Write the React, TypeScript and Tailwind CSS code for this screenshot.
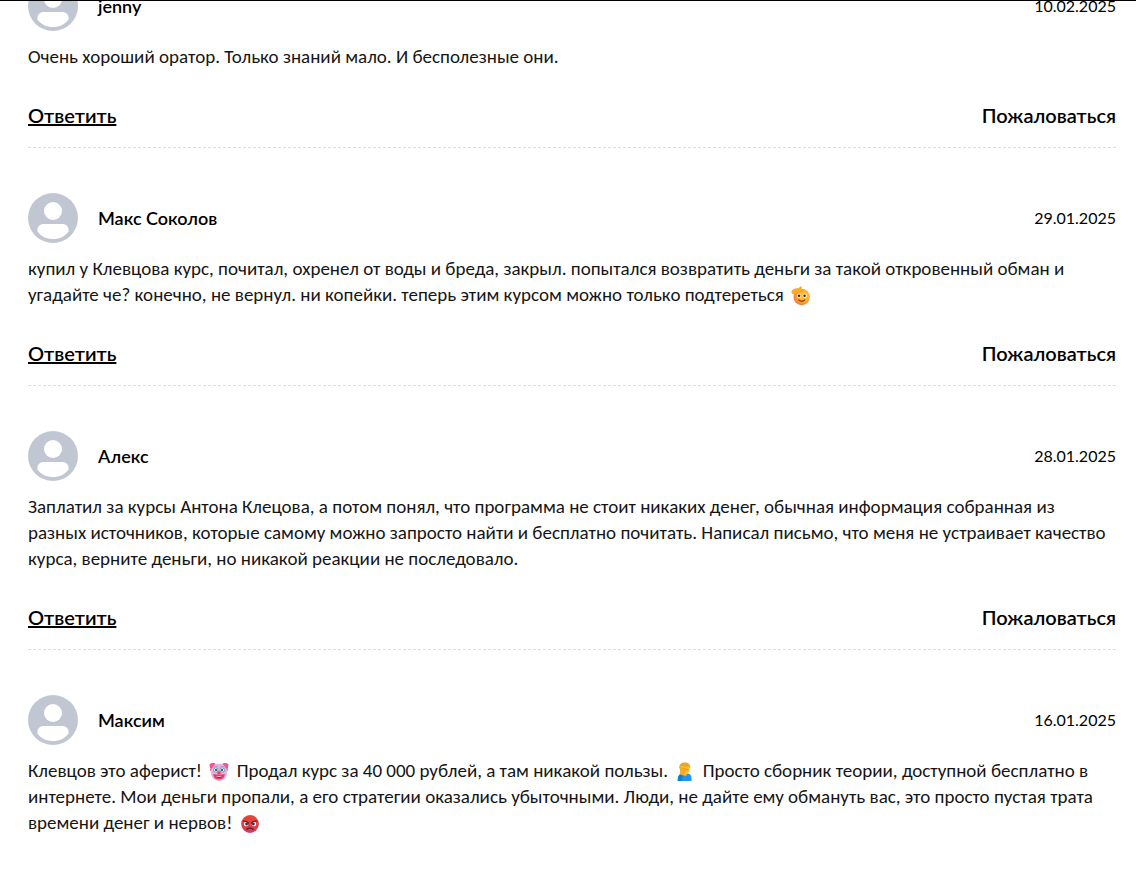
import type { ReactNode } from "react"

type Comment = {
  name: string
  date: string
  body: ReactNode
}

const emojiClass = "mx-[3px] inline-block size-5 align-[-5px]"

function SaluteEmoji() {
  return (
    <svg viewBox="0 0 20 20" className={emojiClass} role="img" aria-label="Салют">
      <defs>
        <radialGradient id="salute" cx=".6" cy=".4" r=".6">
          <stop offset="0" stopColor="#ffd03e" />
          <stop offset=".6" stopColor="#ffb02e" />
          <stop offset="1" stopColor="#f4793b" />
        </radialGradient>
      </defs>
      <circle cx="10.7" cy="11" r="8.2" fill="url(#salute)" />
      <ellipse cx="7.8" cy="9.8" rx="1.9" ry="2" fill="#fff" />
      <ellipse cx="13.8" cy="9.8" rx="1.9" ry="2" fill="#fff" />
      <circle cx="8" cy="9.8" r="1.3" fill="#402a32" />
      <circle cx="13.6" cy="9.8" r="1.3" fill="#402a32" />
      <path d="M7.8 13.8q3 2.8 6 0" fill="none" stroke="#6b3520" strokeWidth="1.1" strokeLinecap="round" />
      <path
        d="M.8 5.2C2 3 5 2.600 7.500 2.600l2-1.800c.8-.4 1.300.4.800 1.200l-.5 1 2.200.5c.8.8.3 1.700-.7 1.900L7 6.200 3.200 8C1.400 8 .4 6.800.8 5.200z"
        fill="#ffae22"
        stroke="#ea9226"
        strokeWidth=".5"
      />
    </svg>
  )
}

function ClownEmoji() {
  return (
    <svg viewBox="0 0 20 20" className={emojiClass} role="img" aria-label="Клоун">
      <path d="M.5 2.500Q3 .3 6.500 1.500L4.500 9q-3 1-3.500-1 .8-1.200.2-2.500-1-1.500-.7-3z" fill="#f5558f" />
      <path d="M19.500 2.500Q17 .3 13.500 1.500L15.500 9q3 1 3.500-1-.8-1.200-.2-2.500 1-1.500.7-3z" fill="#f5558f" />
      <path d="M10 1.500c5 0 8.200 3.500 8.200 8.500S15 19 10 19s-8.200-4-8.200-9S5 1.500 10 1.500z" fill="#e2b6dc" />
      <path d="M1 2.500Q3 .5 6 1.500L3 6.500 1 6zM19 2.500Q17 .5 14 1.500l3 5 2-.5z" fill="#f5558f" />
      <path d="M4.800 5q2-2.200 4 0M11.200 5q2-2.200 4 0" fill="none" stroke="#a882cb" strokeWidth=".8" />
      <circle cx="6.800" cy="8" r="2.500" fill="#4b9cc3" />
      <circle cx="13.200" cy="8" r="2.500" fill="#4b9cc3" />
      <circle cx="6.800" cy="8" r="1.800" fill="#fff" />
      <circle cx="13.200" cy="8" r="1.800" fill="#fff" />
      <circle cx="7" cy="8" r="1" fill="#321b41" />
      <circle cx="13" cy="8" r="1" fill="#321b41" />
      <path d="M4.200 12q5.800 1.500 11.600 0-.3 5.500-5.800 5.500T4.200 12z" fill="#ee3b70" />
      <path d="M6.200 13.500q3.800 1.300 7.600 0-.8 2.400-3.800 2.400t-3.800-2.400z" fill="#8c2450" />
      <path d="M7 13.700q3 1 6 0l-.4.900q-2.600.6-5.200 0z" fill="#fff" />
      <circle cx="10" cy="11" r="1.700" fill="#f23a50" />
    </svg>
  )
}

function FacepalmEmoji() {
  return (
    <svg viewBox="0 0 20 20" className={emojiClass} role="img" aria-label="Рука на лице">
      <path d="M3 19v-3c0-3 2-4.500 5-4.500h4c3 0 4.500 2 4.500 4.500v3z" fill="#2492ef" />
      <path d="M8 11h4v2.500q-2 1.500-4 0z" fill="#e99b22" />
      <path d="M4.800 6c0-3.500 2-5 5-5s5 1.500 5 5-2 7-5 7-5-3.500-5-7z" fill="#ffc02e" />
      <path d="M4.400 7C3.800 2.500 6.300.6 9.800.6s6 1.900 5.400 6.400l-1.200-2.500q-4 .8-7.500-.5z" fill="#e6a72b" />
      <path
        d="M5.800 6.500c1-.8 2.500-.6 4-.3l3 .8q.8.8-.2 1.200l-3 .1-.3 2.300-1.800 3-2.500-.5.5-3.500z"
        fill="#f8ad25"
        stroke="#dc861b"
        strokeWidth=".4"
      />
      <path d="M2.500 19c0-3.500 1-5.500 2.500-6.500l3 1c-.8 2-1 3-1 5.500z" fill="#0b7ee0" />
    </svg>
  )
}

function AngryEmoji() {
  return (
    <svg viewBox="0 0 20 20" className={emojiClass} role="img" aria-label="Злость">
      <defs>
        <linearGradient id="angry" x1="0" y1="0" x2="0" y2="1">
          <stop offset="0" stopColor="#e8452f" />
          <stop offset="1" stopColor="#d23c62" />
        </linearGradient>
      </defs>
      <circle cx="10" cy="10" r="8.900" fill="url(#angry)" />
      <circle cx="6" cy="10" r="2.200" fill="#fff" />
      <circle cx="14" cy="10" r="2.200" fill="#fff" />
      <circle cx="6.600" cy="10" r="1.400" fill="#402a32" />
      <circle cx="13.400" cy="10" r="1.400" fill="#402a32" />
      <path d="M3.500 7q3 0 5 2M16.500 7q-3 0-5 2" fill="none" stroke="#5a1a2b" strokeWidth="1.200" strokeLinecap="round" />
      <path d="M7 15.300q3-2.600 6 0" fill="none" stroke="#4a1525" strokeWidth="1.200" strokeLinecap="round" />
    </svg>
  )
}

const comments: Comment[] = [
  {
    name: "jenny",
    date: "10.02.2025",
    body: "Очень хороший оратор. Только знаний мало. И бесполезные они.",
  },
  {
    name: "Макс Соколов",
    date: "29.01.2025",
    body: (
      <>
        купил у Клевцова курс, почитал, охренел от воды и бреда, закрыл. попытался возвратить деньги за такой
        откровенный обман и угадайте че? конечно, не вернул. ни копейки. теперь этим курсом можно только
        подтереться <SaluteEmoji />
      </>
    ),
  },
  {
    name: "Алекс",
    date: "28.01.2025",
    body: "Заплатил за курсы Антона Клецова, а потом понял, что программа не стоит никаких денег, обычная информация собранная из разных источников, которые самому можно запросто найти и бесплатно почитать. Написал письмо, что меня не устраивает качество курса, верните деньги, но никакой реакции не последовало.",
  },
  {
    name: "Максим",
    date: "16.01.2025",
    body: (
      <>
        Клевцов это аферист! <ClownEmoji /> Продал курс за 40 000 рублей, а там никакой пользы.{" "}
        <FacepalmEmoji /> Просто сборник теории, доступной бесплатно в интернете. Мои деньги пропали, а его
        стратегии оказались убыточными. Люди, не дайте ему обмануть вас, это просто пустая трата времени денег
        и нервов! <AngryEmoji />
      </>
    ),
  },
]

function Avatar() {
  return (
    <svg viewBox="0 0 50 50" className="size-[50px] shrink-0" aria-hidden="true">
      <circle cx="25" cy="25" r="25" fill="#c1c7d2" />
      <circle cx="25" cy="18" r="9" fill="#fff" />
      <path
        d="M15.500 31h19c3.500 0 6 2.500 6 5.500v2C37 43.500 31.500 46 25 46S13 43.500 9.500 38.500v-2c0-3 2.500-5.500 6-5.500z"
        fill="#fff"
      />
    </svg>
  )
}

function CommentItem({ name, date, body }: Comment) {
  return (
    <article className="mb-[45px] border-b border-dashed border-[#dddddd] pb-[18px]">
      <header className="flex items-center">
        <Avatar />
        <h3 className="ml-5 text-lg font-semibold">{name}</h3>
        <time className="ml-auto text-base">{date}</time>
      </header>
      <p className="mt-[13px] font-['Carlito','Lato',sans-serif] text-[19px] leading-[26px] text-[#151515]">{body}</p>
      <div className="mt-[31px] flex justify-between text-xl leading-7 font-semibold">
        <button type="button" className="underline">
          Ответить
        </button>
        <button type="button">Пожаловаться</button>
      </div>
    </article>
  )
}

export default function App() {
  return (
    <main className="h-screen overflow-hidden border-t border-black bg-white font-['Lato',sans-serif] text-black">
      <section className="-mt-5 pr-5 pl-7">
        {comments.map((comment) => (
          <CommentItem key={comment.name} {...comment} />
        ))}
      </section>
    </main>
  )
}
